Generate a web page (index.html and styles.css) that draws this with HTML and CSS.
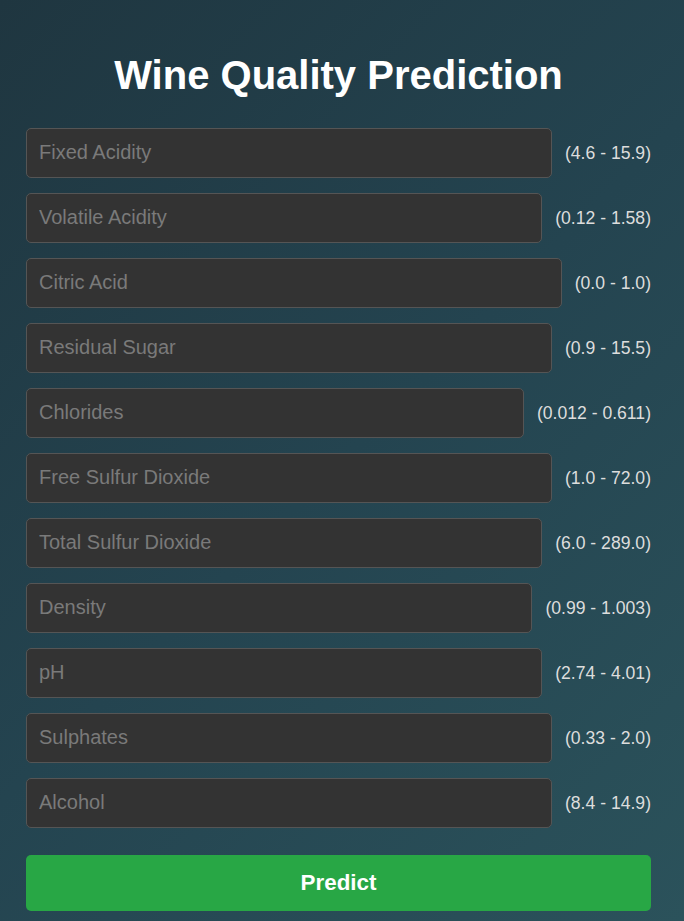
FILE: index.html
```html
<!DOCTYPE html>
<html>
<head>
<meta charset="utf-8">
<title>Wine Quality Prediction</title>
<link rel="stylesheet" href="styles.css">
</head>
<body>
<div class="container">
  <h1 class="title">Wine Quality Prediction</h1>
  <form class="form">
    <div class="row"><input class="field" placeholder="Fixed Acidity"><span class="range">(4.6 - 15.9)</span></div>
    <div class="row"><input class="field" placeholder="Volatile Acidity"><span class="range">(0.12 - 1.58)</span></div>
    <div class="row"><input class="field" placeholder="Citric Acid"><span class="range">(0.0 - 1.0)</span></div>
    <div class="row"><input class="field" placeholder="Residual Sugar"><span class="range">(0.9 - 15.5)</span></div>
    <div class="row"><input class="field" placeholder="Chlorides"><span class="range">(0.012 - 0.611)</span></div>
    <div class="row"><input class="field" placeholder="Free Sulfur Dioxide"><span class="range">(1.0 - 72.0)</span></div>
    <div class="row"><input class="field" placeholder="Total Sulfur Dioxide"><span class="range">(6.0 - 289.0)</span></div>
    <div class="row"><input class="field" placeholder="Density"><span class="range">(0.99 - 1.003)</span></div>
    <div class="row"><input class="field" placeholder="pH"><span class="range">(2.74 - 4.01)</span></div>
    <div class="row"><input class="field" placeholder="Sulphates"><span class="range">(0.33 - 2.0)</span></div>
    <div class="row"><input class="field" placeholder="Alcohol"><span class="range">(8.4 - 14.9)</span></div>
    <button type="button" class="predict">Predict</button>
  </form>
</div>
</body>
</html>
```
FILE: styles.css
```css
html, body {
  margin: 0;
  padding: 0;
}
body {
  min-height: 100vh;
  background: linear-gradient(135deg, #1f3640 0%, #244450 50%, #2b525b 100%);
  font-family: "Liberation Sans", Arial, sans-serif;
  color: #fff;
}
.container {
  width: 625px;
  margin-left: 26px;
  padding-top: 52px;
}
.title {
  margin: 0 0 30px;
  text-align: center;
  font-size: 40px;
  font-weight: bold;
  line-height: 46px;
  color: #fff;
}
.form {
  display: flex;
  flex-direction: column;
  gap: 15px;
}
.row {
  display: flex;
  align-items: center;
}
.field {
  flex: 1;
  min-width: 0;
  height: 50px;
  box-sizing: border-box;
  padding: 0 12px 2px;
  background: #333;
  border: 1px solid #555;
  border-radius: 5px;
  color: #fff;
  font-family: "Liberation Sans", Arial, sans-serif;
  font-size: 20px;
  outline: none;
}
.field::placeholder {
  color: #7a7a7a;
}
.range {
  margin-left: 13px;
  white-space: nowrap;
  font-size: 17.6px;
  color: #ddd;
}
.predict {
  margin-top: 12px;
  height: 56px;
  width: 100%;
  border: none;
  border-radius: 5px;
  background: #28a745;
  color: #fff;
  font-family: "Liberation Sans", Arial, sans-serif;
  font-size: 22.4px;
  font-weight: bold;
  cursor: pointer;
}
```
